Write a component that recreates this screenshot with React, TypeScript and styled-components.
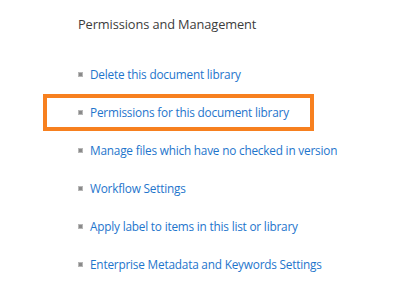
import styled, { createGlobalStyle } from "styled-components";

const Global = createGlobalStyle`
  html, body {
    margin: 0;
    padding: 0;
    background: #ffffff;
  }
  body {
    font-family: "Open Sans", "Noto Sans", "Liberation Sans", sans-serif;
  }
`;

const Page = styled.div`
  width: 400px;
  height: 307px;
  padding: 14px 0 0 78px;
  box-sizing: border-box;
  overflow: hidden;
`;

const Title = styled.h2`
  margin: 0;
  font-size: 12.8px;
  font-weight: 400;
  color: #3c3c3c;
  line-height: 20px;
  letter-spacing: -0.1px;
`;

const LinkList = styled.ul`
  list-style: none;
  margin: 21px 0 0;
  padding: 0;
  display: flex;
  flex-direction: column;
`;

const Item = styled.li<{ $marked?: boolean }>`
  position: relative;
  display: flex;
  align-items: center;
  gap: 7px;
  height: 38px;

  ${(p) =>
    p.$marked &&
    `
    &::before {
      content: "";
      position: absolute;
      left: -35px;
      top: 1px;
      width: 271px;
      height: 37px;
      border: 4px solid #f7801f;
      box-sizing: border-box;
    }
  `}
`;

const Bullet = styled.span`
  width: 5px;
  height: 5px;
  box-sizing: border-box;
  background: #8a8a8a;
  border: 1px solid #b8b8b8;
  flex: none;
  margin-top: 1px;
`;

const Link = styled.a`
  font-size: 11.8px;
  color: #1e75cc;
  text-decoration: none;
  letter-spacing: -0.2px;
  white-space: nowrap;
`;

const links = [
  "Delete this document library",
  "Permissions for this document library",
  "Manage files which have no checked in version",
  "Workflow Settings",
  "Apply label to items in this list or library",
  "Enterprise Metadata and Keywords Settings",
];

function App() {
  return (
    <>
      <Global />
      <Page>
        <Title>Permissions and Management</Title>
        <LinkList>
          {links.map((text, i) => (
            <Item key={text} $marked={i === 1}>
              <Bullet />
              <Link href="#">{text}</Link>
            </Item>
          ))}
        </LinkList>
      </Page>
    </>
  );
}

export default App;
